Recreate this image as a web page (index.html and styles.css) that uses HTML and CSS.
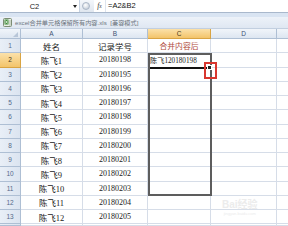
FILE: index.html
```html
<!DOCTYPE html>
<html lang="zh">
<head>
<meta charset="utf-8">
<link rel="stylesheet" href="styles.css">
</head>
<body>
<div class="app">
  <div class="fbar">
    <div class="namebox"><span class="nb-text">C2</span><span class="nb-arrow"></span></div>
    <div class="fbtn"><span class="knob"></span></div>
    <div class="fx">f<span class="fx-x">x</span></div>
    <div class="finput">=A2&amp;B2</div>
  </div>
  <div class="band"></div>
  <div class="title">
    <svg class="xicon" width="9" height="9" viewBox="0 0 9 9">
      <rect x="0.5" y="0.5" width="8" height="8" rx="1" fill="#e9efe6" stroke="#7c8c74"/>
      <rect x="1.5" y="1.5" width="4" height="5" fill="#3f8a3a"/>
      <path d="M2.3 2.5l2.4 3M4.7 2.5l-2.4 3" stroke="#fff" stroke-width="0.8"/>
      <path d="M6 3h2M6 5h2M6 7h2" stroke="#8a9a84" stroke-width="0.6"/>
    </svg>
    <span class="title-text">excel合并单元格保留所有内容.xls&nbsp; [兼容模式]</span>
  </div>
  <div class="sheet">
    <div class="hd corner"><span class="tri"></span></div>
    <div class="hd col">A</div>
    <div class="hd col">B</div>
    <div class="hd col sel">C</div>
    <div class="hd col">D</div>
    <div class="hd col last"></div>

    <div class="hd row">1</div><div class="c">姓名</div><div class="c">记录学号</div><div class="c red">合并内容后</div><div class="c"></div><div class="c last"></div>
    <div class="hd row sel">2</div><div class="c">陈飞1</div><div class="c num">20180198</div><div class="c left small">陈飞120180198</div><div class="c"></div><div class="c last"></div>
    <div class="hd row">3</div><div class="c">陈飞2</div><div class="c num">20180195</div><div class="c"></div><div class="c"></div><div class="c last"></div>
    <div class="hd row">4</div><div class="c">陈飞3</div><div class="c num">20180196</div><div class="c"></div><div class="c"></div><div class="c last"></div>
    <div class="hd row">5</div><div class="c">陈飞4</div><div class="c num">20180197</div><div class="c"></div><div class="c"></div><div class="c last"></div>
    <div class="hd row">6</div><div class="c">陈飞5</div><div class="c num">20180198</div><div class="c"></div><div class="c"></div><div class="c last"></div>
    <div class="hd row">7</div><div class="c">陈飞6</div><div class="c num">20180199</div><div class="c"></div><div class="c"></div><div class="c last"></div>
    <div class="hd row">8</div><div class="c">陈飞7</div><div class="c num">20180200</div><div class="c"></div><div class="c"></div><div class="c last"></div>
    <div class="hd row">9</div><div class="c">陈飞8</div><div class="c num">20180201</div><div class="c"></div><div class="c"></div><div class="c last"></div>
    <div class="hd row">10</div><div class="c">陈飞9</div><div class="c num">20180202</div><div class="c"></div><div class="c"></div><div class="c last"></div>
    <div class="hd row">11</div><div class="c">陈飞10</div><div class="c num">20180203</div><div class="c"></div><div class="c"></div><div class="c last"></div>
    <div class="hd row">12</div><div class="c">陈飞11</div><div class="c num">20180204</div><div class="c"></div><div class="c"></div><div class="c last"></div>
    <div class="hd row">13</div><div class="c">陈飞12</div><div class="c num">20180205</div><div class="c"></div><div class="c"></div><div class="c last"></div>
    <div class="hd row"></div><div class="c"></div><div class="c"></div><div class="c"></div><div class="c"></div><div class="c last"></div>

    <div class="selbox"></div>
    <div class="activeline"></div>
    <div class="handle"></div>
    <div class="mark"></div>
    <div class="wm"><span class="wm-big">Bai经验</span><span class="wm-small">jingyan.baidu.com</span></div>
  </div>
</div>
</body>
</html>
```
FILE: styles.css
```css
* { box-sizing: border-box; }
html, body { margin: 0; padding: 0; }
body {
  width: 288px;
  height: 226px;
  overflow: hidden;
  background: #fff;
  font-family: "Liberation Sans", "Noto Sans CJK SC", sans-serif;
}
.app { width: 288px; height: 226px; display: flex; flex-direction: column; }

.fbar {
  height: 13px;
  display: flex;
  align-items: stretch;
  background: #fff;
  border-bottom: 1px solid #a9b8cc;
}
.namebox {
  width: 80px;
  display: flex;
  align-items: center;
  border-right: 1px solid #c6d2e2;
  position: relative;
}
.nb-text {
  flex: 1;
  text-align: center;
  font-size: 7.5px;
  color: #222;
  padding-right: 4px;
}
.nb-arrow {
  width: 0; height: 0;
  margin-right: 2px;
  border-left: 2.5px solid transparent;
  border-right: 2.5px solid transparent;
  border-top: 3px solid #222;
}
.fbtn {
  width: 14px;
  display: flex;
  align-items: center;
  padding-left: 2px;
  background: linear-gradient(#f4f7fb, #dfe6ef);
}
.knob {
  width: 8px; height: 8px; border-radius: 50%;
  background: radial-gradient(circle at 40% 35%, #ffffff, #b9c4d2);
  border: 1px solid #aab6c6;
}
.fx {
  width: 12px;
  font-family: "Liberation Serif", serif;
  font-style: italic;
  font-size: 7.5px;
  line-height: 12px;
  color: #333;
  text-align: center;
  border-right: 1px solid #dde4ee;
}
.fx-x { font-size: 5.5px; }
.finput {
  flex: 1;
  font-size: 7.5px;
  line-height: 12px;
  padding-left: 2px;
  color: #111;
}

.band { height: 4px; background: #d9e4f2; }

.title {
  height: 12px;
  display: flex;
  align-items: center;
  gap: 3px;
  padding-left: 3px;
  background: linear-gradient(#edf2f9, #dfe7f2);
  border-bottom: 1px solid #c2cfe0;
}
.xicon { flex: none; }
.title-text {
  font-size: 6.2px;
  color: #6d7580;
  white-space: nowrap;
}

.sheet {
  position: relative;
  flex: 1;
  display: grid;
  grid-template-columns: 21px 62px 65px 63px 66px 11px;
  grid-template-rows: 10px repeat(13, 14.25px) 1fr;
  overflow: hidden;
}
.c {
  border-right: 1px solid #d6dde8;
  border-bottom: 1px solid #d6dde8;
  display: flex;
  align-items: center;
  justify-content: center;
  font-family: "Liberation Serif", "Noto Sans CJK SC", serif;
  font-size: 8.5px;
  color: #1a1a1a;
  white-space: nowrap;
}
.c.num { font-size: 8px; }
.c.red { color: #b04a3c; font-family: "Noto Sans CJK SC", sans-serif; font-size: 7.8px; }
.c.left { justify-content: flex-start; padding-left: 2px; }
.c.small { font-size: 7.2px; }
.c.last { border-right: none; }

.hd {
  display: flex;
  align-items: center;
  justify-content: center;
  font-family: "Liberation Sans", sans-serif;
  font-size: 6.5px;
  color: #3f5272;
  background: linear-gradient(#f1f5fa, #dde6f1);
  border-right: 1px solid #aebfd4;
  border-bottom: 1px solid #aebfd4;
}
.hd.row { background: linear-gradient(90deg, #e9eff7, #dbe4f0); color: #55698a; }
.hd.sel { background: linear-gradient(#fbe1aa, #f3c46a); border-color: #d9a443; color: #4a3a1a; }
.hd.last { border-right: none; }
.corner { justify-content: flex-end; align-items: flex-end; padding: 0 2px 1px 0; }
.tri {
  width: 0; height: 0;
  border-left: 5px solid transparent;
  border-bottom: 5px solid #b8c6d8;
}

.selbox {
  position: absolute;
  left: 148px;
  top: 24px;
  width: 64px;
  height: 143px;
  border: 2px solid #5d5d5d;
}
.activeline {
  position: absolute;
  left: 150px;
  top: 38px;
  width: 57px;
  height: 2px;
  background: #111;
}
.handle {
  position: absolute;
  left: 207px;
  top: 36px;
  width: 5px;
  height: 5px;
  background: #222;
  border: 1px solid #fff;
}
.mark {
  position: absolute;
  left: 204px;
  top: 33px;
  width: 13px;
  height: 17px;
  border: 2px solid #d8372f;
}
.wm {
  position: absolute;
  left: 222px;
  top: 171px;
  display: flex;
  flex-direction: column;
  align-items: center;
  color: #ececec;
  font-family: "Liberation Sans", "Noto Sans CJK SC", sans-serif;
  line-height: 1;
}
.wm-big { font-size: 10px; font-weight: bold; }
.wm-small { font-size: 4px; margin-top: 2px; }
```
